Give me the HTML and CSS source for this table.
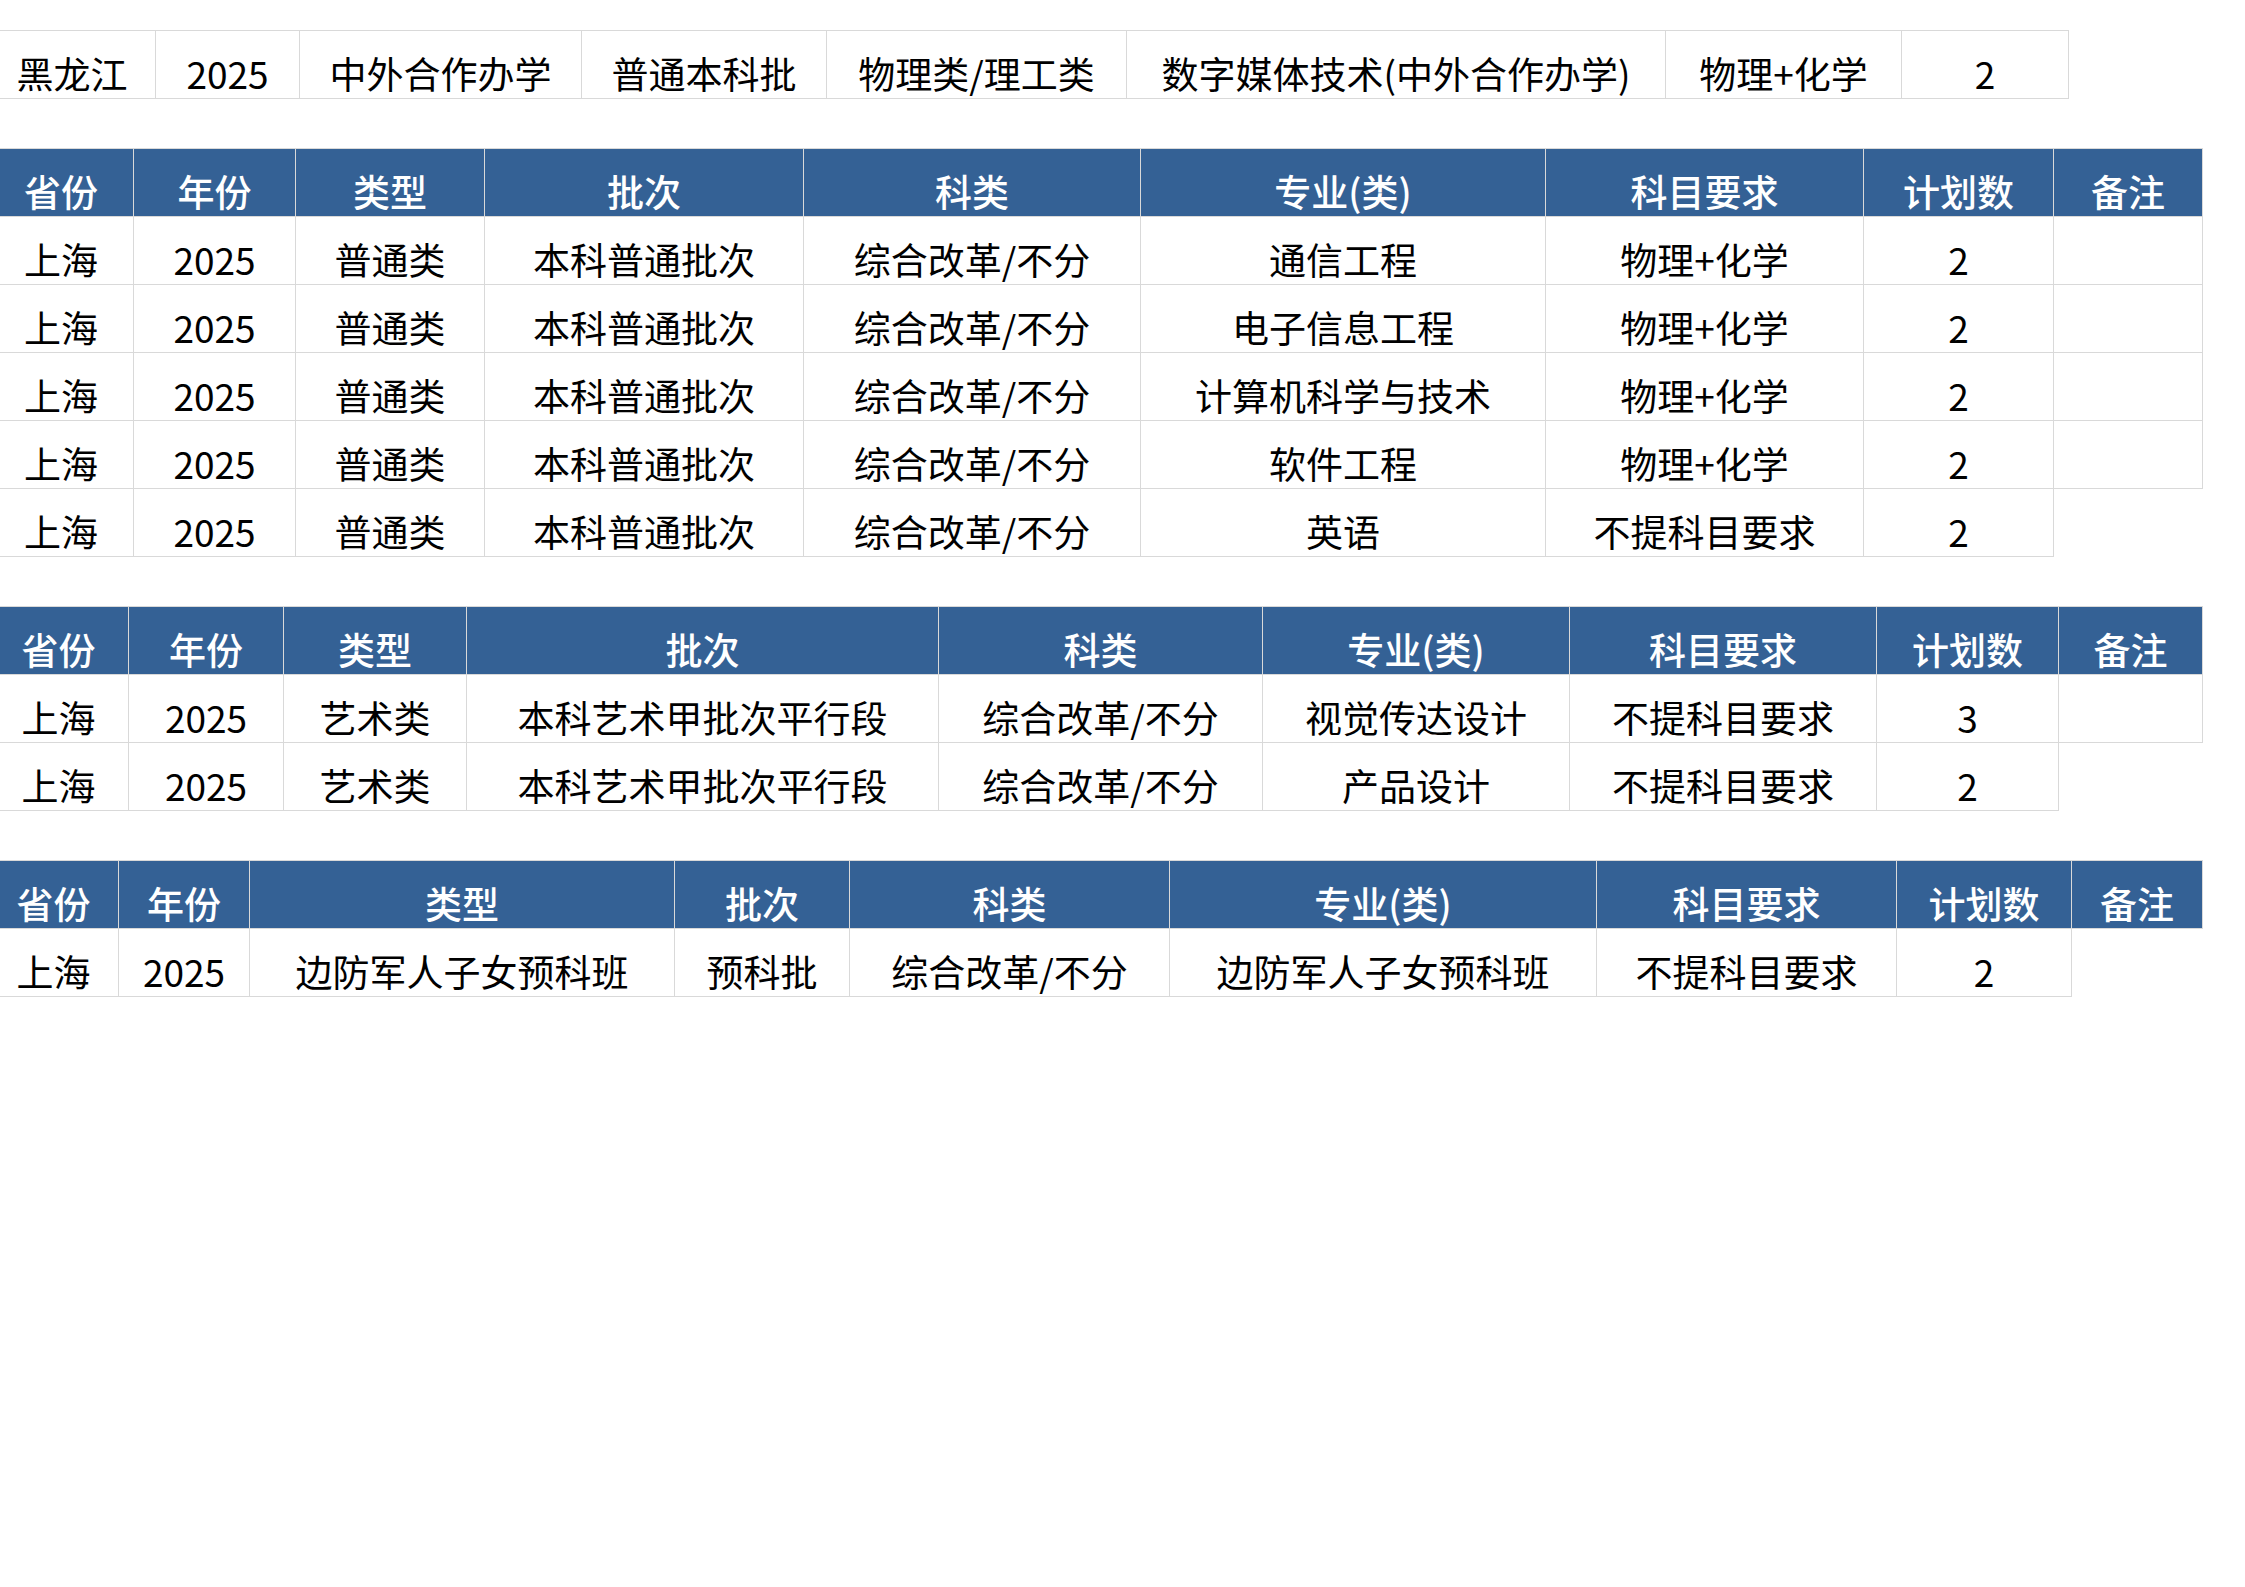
FILE: index.html
```html
<!DOCTYPE html>
<html lang="zh-CN">
<head>
<meta charset="utf-8">
<title>招生计划</title>
<link rel="stylesheet" href="styles.css">
</head>
<body>
<div class="sheet">
  <table class="grid t-a">
    <colgroup><col><col><col><col><col><col><col><col></colgroup>
    <tr>
      <td>黑龙江</td><td>2025</td><td>中外合作办学</td><td>普通本科批</td><td>物理类/理工类</td><td>数字媒体技术(中外合作办学)</td><td>物理+化学</td><td>2</td>
    </tr>
  </table>

  <table class="grid t-b">
    <colgroup><col><col><col><col><col><col><col><col><col></colgroup>
    <tr class="head"><th>省份</th><th>年份</th><th>类型</th><th>批次</th><th>科类</th><th>专业(类)</th><th>科目要求</th><th>计划数</th><th>备注</th></tr>
    <tr><td>上海</td><td>2025</td><td>普通类</td><td>本科普通批次</td><td>综合改革/不分</td><td>通信工程</td><td>物理+化学</td><td>2</td><td></td></tr>
    <tr><td>上海</td><td>2025</td><td>普通类</td><td>本科普通批次</td><td>综合改革/不分</td><td>电子信息工程</td><td>物理+化学</td><td>2</td><td></td></tr>
    <tr><td>上海</td><td>2025</td><td>普通类</td><td>本科普通批次</td><td>综合改革/不分</td><td>计算机科学与技术</td><td>物理+化学</td><td>2</td><td></td></tr>
    <tr><td>上海</td><td>2025</td><td>普通类</td><td>本科普通批次</td><td>综合改革/不分</td><td>软件工程</td><td>物理+化学</td><td>2</td><td></td></tr>
    <tr><td>上海</td><td>2025</td><td>普通类</td><td>本科普通批次</td><td>综合改革/不分</td><td>英语</td><td>不提科目要求</td><td>2</td><td class="blank"></td></tr>
  </table>

  <table class="grid t-c">
    <colgroup><col><col><col><col><col><col><col><col><col></colgroup>
    <tr class="head"><th>省份</th><th>年份</th><th>类型</th><th>批次</th><th>科类</th><th>专业(类)</th><th>科目要求</th><th>计划数</th><th>备注</th></tr>
    <tr><td>上海</td><td>2025</td><td>艺术类</td><td>本科艺术甲批次平行段</td><td>综合改革/不分</td><td>视觉传达设计</td><td>不提科目要求</td><td>3</td><td></td></tr>
    <tr><td>上海</td><td>2025</td><td>艺术类</td><td>本科艺术甲批次平行段</td><td>综合改革/不分</td><td>产品设计</td><td>不提科目要求</td><td>2</td><td class="blank"></td></tr>
  </table>

  <table class="grid t-d">
    <colgroup><col><col><col><col><col><col><col><col><col></colgroup>
    <tr class="head"><th>省份</th><th>年份</th><th>类型</th><th>批次</th><th>科类</th><th>专业(类)</th><th>科目要求</th><th>计划数</th><th>备注</th></tr>
    <tr><td>上海</td><td>2025</td><td>边防军人子女预科班</td><td>预科批</td><td>综合改革/不分</td><td>边防军人子女预科班</td><td>不提科目要求</td><td>2</td><td class="blank"></td></tr>
  </table>
</div>
</body>
</html>
```

FILE: styles.css
```css
html, body {
  margin: 0;
  padding: 0;
  background: #ffffff;
}

body {
  font-family: "Noto Sans CJK SC", "Noto Sans", sans-serif;
  color: #000000;
  overflow: hidden;
}

.sheet {
  padding-top: 30px;
  display: flex;
  flex-direction: column;
  gap: 49px;
}

.grid {
  border-collapse: collapse;
  table-layout: fixed;
  margin-left: -12px;
}

.grid td,
.grid th {
  box-sizing: border-box;
  height: 68px;
  padding: 0 0 6px 0;
  border: 1px solid #d9d9d9;
  text-align: center;
  vertical-align: bottom;
  font-size: 37px;
  line-height: 37px;
  font-weight: 400;
  white-space: nowrap;
  overflow: hidden;
}

.grid .head th {
  background: #346195;
  color: #ffffff;
  font-weight: 500;
}

.grid td.blank {
  border-right: none;
  border-bottom: none;
}

/* table A: single row */
.t-a { width: 2080px; }
.t-a col:nth-child(1) { width: 167px; }
.t-a col:nth-child(2) { width: 144px; }
.t-a col:nth-child(3) { width: 282px; }
.t-a col:nth-child(4) { width: 245px; }
.t-a col:nth-child(5) { width: 300px; }
.t-a col:nth-child(6) { width: 539px; }
.t-a col:nth-child(7) { width: 236px; }
.t-a col:nth-child(8) { width: 167px; }

/* table B */
.t-b { width: 2214px; }
.t-b col:nth-child(1) { width: 145px; }
.t-b col:nth-child(2) { width: 162px; }
.t-b col:nth-child(3) { width: 189px; }
.t-b col:nth-child(4) { width: 319px; }
.t-b col:nth-child(5) { width: 337px; }
.t-b col:nth-child(6) { width: 405px; }
.t-b col:nth-child(7) { width: 318px; }
.t-b col:nth-child(8) { width: 190px; }
.t-b col:nth-child(9) { width: 149px; }

/* table C */
.t-c { width: 2214px; }
.t-c col:nth-child(1) { width: 140px; }
.t-c col:nth-child(2) { width: 155px; }
.t-c col:nth-child(3) { width: 183px; }
.t-c col:nth-child(4) { width: 472px; }
.t-c col:nth-child(5) { width: 324px; }
.t-c col:nth-child(6) { width: 307px; }
.t-c col:nth-child(7) { width: 307px; }
.t-c col:nth-child(8) { width: 182px; }
.t-c col:nth-child(9) { width: 144px; }

/* table D */
.t-d { width: 2214px; }
.t-d col:nth-child(1) { width: 130px; }
.t-d col:nth-child(2) { width: 131px; }
.t-d col:nth-child(3) { width: 425px; }
.t-d col:nth-child(4) { width: 175px; }
.t-d col:nth-child(5) { width: 320px; }
.t-d col:nth-child(6) { width: 427px; }
.t-d col:nth-child(7) { width: 300px; }
.t-d col:nth-child(8) { width: 175px; }
.t-d col:nth-child(9) { width: 131px; }
```
